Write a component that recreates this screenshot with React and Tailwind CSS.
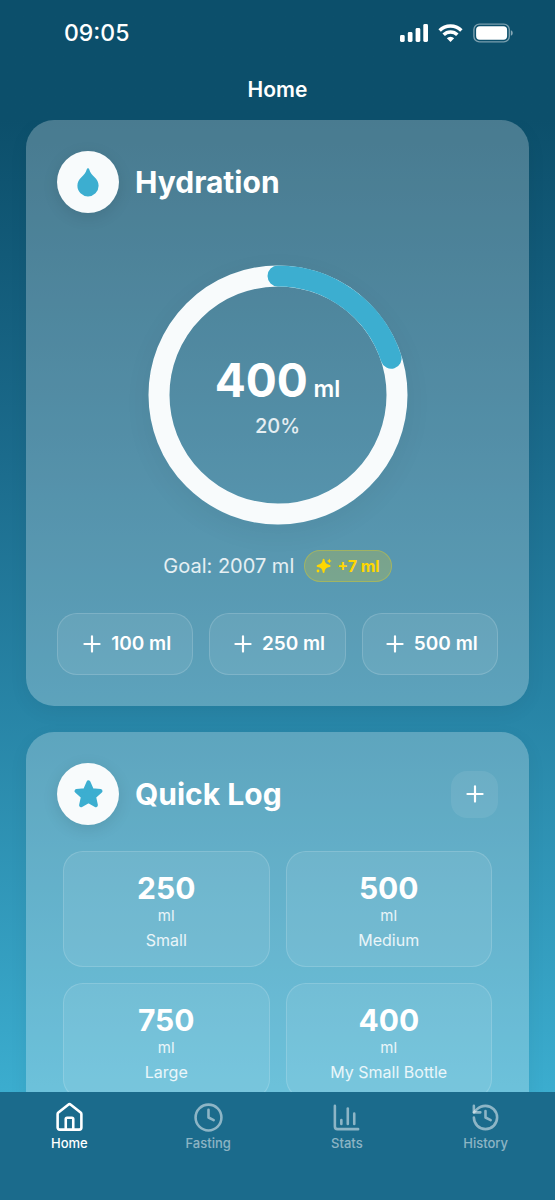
import React from "react";
import { ChartColumn, Clock, History, Plus } from "lucide-react";

const quickAmounts = [100, 250, 500];

const bottles = [
  { amount: 250, name: "Small" },
  { amount: 500, name: "Medium" },
  { amount: 750, name: "Large" },
  { amount: 400, name: "My Small Bottle" },
];

function DropIcon() {
  return (
    <svg viewBox="0 0 22 29" className="h-[29px] w-[22px]" fill="currentColor" aria-hidden="true">
      <path d="M11 .3c.7 0 1.1.4 1.3 1.1.8 3.5 2.9 5.4 5.3 7.9 2.4 2.4 4 5 4 8.5a10.6 10.6 0 0 1-21.2 0c0-3.5 1.6-6.1 4-8.5 2.4-2.5 4.5-4.4 5.3-7.9.2-.7.6-1.1 1.3-1.1z" />
    </svg>
  );
}

function StarIcon() {
  return (
    <svg
      viewBox="0 0 31 31"
      className="size-[31px]"
      fill="currentColor"
      stroke="currentColor"
      strokeWidth="4"
      strokeLinejoin="round"
      aria-hidden="true"
    >
      <path d="M15.5 3.4 19 11.2 27.5 12.1 21.1 17.8 22.9 26.2 15.5 21.9 8.1 26.2 9.9 17.8 3.5 12.1 12 11.2z" />
    </svg>
  );
}

function SparklesIcon() {
  return (
    <svg viewBox="0 0 16 16" className="size-4" fill="currentColor" aria-hidden="true">
      <path d="M7.6.8c.5 0 .8.3.9.8.5 3.6 1.700 4.700 5.200 5.300.5.1.8.5.8 1s-.3.900-.8 1c-3.500.6-4.700 1.700-5.200 5.300-.1.500-.4.800-.9.800s-.8-.3-.9-.8c-.5-3.600-1.700-4.700-5.200-5.300-.5-.1-.8-.5-.8-1s.3-.9.8-1c3.500-.6 4.700-1.700 5.200-5.300.1-.5.4-.8.900-.8z" />
      <path d="M13.300.6 14.100 2.200 15.700 3 14.100 3.800 13.300 5.400 12.500 3.800 10.900 3 12.500 2.200z" />
      <circle cx="2" cy="13" r="1.4" />
    </svg>
  );
}

function HomeIcon({ className, strokeWidth }) {
  return (
    <svg
      viewBox="0 0 24 24"
      fill="none"
      stroke="currentColor"
      strokeWidth={strokeWidth}
      strokeLinecap="round"
      strokeLinejoin="round"
      className={className}
      aria-hidden="true"
    >
      <path d="M2.8 9.4a1.6 1.6 0 0 1 .6-1.2L11 2.1a1.6 1.6 0 0 1 2 0l7.6 6.1a1.6 1.6 0 0 1 .6 1.2v10.4a1.6 1.6 0 0 1-1.6 1.6H4.4a1.6 1.6 0 0 1-1.6-1.6z" />
      <path d="M9.1 21.4v-8.2a1 1 0 0 1 1-1h3.8a1 1 0 0 1 1 1v8.2" />
    </svg>
  );
}

const tabs = [
  { label: "Home", icon: HomeIcon, active: true },
  { label: "Fasting", icon: Clock },
  { label: "Stats", icon: ChartColumn },
  { label: "History", icon: History },
];

function StatusBar() {
  return (
    <div className="flex h-[66px] items-center justify-between pr-[42px] pl-16">
      <span className="text-[23px] font-medium">09:05</span>
      <div className="flex items-center gap-[10px]">
        <svg viewBox="0 0 28 20" className="h-5 w-7" fill="currentColor" aria-hidden="true">
          <rect x="0" y="12" width="4.7" height="7" rx="1.4" />
          <rect x="7.8" y="9" width="4.7" height="10" rx="1.4" />
          <rect x="15.6" y="5" width="4.7" height="14" rx="1.4" />
          <rect x="23.3" y="1" width="4.7" height="18" rx="1.4" />
        </svg>
        <svg viewBox="0 0 26 20" className="h-5 w-[25px]" fill="none" stroke="currentColor" strokeWidth="3.6" aria-hidden="true">
          <path d="M1.7 7.4a16 16 0 0 1 22.6 0" />
          <path d="M5.9 11.9a10 10 0 0 1 14.2 0" />
          <path d="M13 19.3l-3.8-3.9a5.4 5.4 0 0 1 7.6 0z" fill="currentColor" stroke="none" />
        </svg>
        <svg viewBox="0 0 40 20" className="h-5 w-10" aria-hidden="true">
          <rect x="0.9" y="1.1" width="35.4" height="17.8" rx="5.5" fill="none" stroke="currentColor" strokeOpacity="0.45" strokeWidth="1.4" />
          <rect x="3.1" y="3.3" width="31" height="13.4" rx="3.6" fill="currentColor" />
          <path d="M37.8 7.3c1.6.6 1.9 1.7 1.9 2.7s-.3 2.1-1.9 2.7z" fill="currentColor" fillOpacity="0.5" />
        </svg>
      </div>
    </div>
  );
}

function CardTitle({ icon: Icon, children }) {
  return (
    <div className="flex items-center gap-4">
      <div className="flex size-[62px] items-center justify-center rounded-full bg-[#f8fbfc] text-[#3caed0] shadow-[0_4px_16px] shadow-black/10">
        <Icon />
      </div>
      <h2 className="text-3xl font-bold">{children}</h2>
    </div>
  );
}

function ProgressRing({ amount, percent }) {
  return (
    <div className="relative mx-auto size-[260px] rounded-full shadow-[0_8px_28px] shadow-black/5">
      <svg viewBox="0 0 260 260" className="size-full -rotate-90" fill="none" strokeWidth="21" aria-hidden="true">
        <circle cx="130" cy="130" r="119" stroke="#f8fbfc" />
        <circle
          cx="130"
          cy="130"
          r="119"
          stroke="#3caed0"
          strokeLinecap="round"
          pathLength="100"
          strokeDasharray={`${percent} 100`}
        />
      </svg>
      <div className="absolute inset-0 flex flex-col items-center justify-center pt-[6px]">
        <p className="text-[23px] leading-[46px] font-semibold">
          <span className="text-[46px] font-bold">{amount}</span> ml
        </p>
        <p className="text-xl leading-7 font-medium text-white/85">{percent}%</p>
      </div>
    </div>
  );
}

export default function App() {
  return (
    <div className="flex h-screen flex-col bg-linear-to-b from-[#0c4f6b] from-10% via-[#1b6b8c] via-38% to-[#3caed0] to-92% font-['Inter',sans-serif] text-white">
      <header className="shrink-0">
        <StatusBar />
        <h1 className="h-[54px] text-center text-[21px] leading-[48px] font-semibold">Home</h1>
      </header>

      <main className="min-h-0 flex-1 space-y-[26px] overflow-y-auto px-[26px] [scrollbar-width:none]">
        <section className="rounded-[28px] bg-white/25 p-[31px] shadow-[0_6px_20px] shadow-black/5">
          <CardTitle icon={DropIcon}>Hydration</CardTitle>
          <div className="pt-[52px] pb-[25px]">
            <ProgressRing amount={400} percent={20} />
          </div>
          <div className="flex items-center justify-center gap-[10px]">
            <p className="text-xl text-white/85">Goal: 2007 ml</p>
            <span className="flex h-8 items-center gap-[5px] rounded-full border border-[#ffd700]/30 bg-[#ffd700]/20 px-[11px] text-base font-bold text-[#ffd700]">
              <SparklesIcon />
              +7 ml
            </span>
          </div>
          <div className="mt-[31px] grid grid-cols-3 gap-4">
            {quickAmounts.map((amount) => (
              <button
                key={amount}
                className="flex h-[62px] items-center justify-center gap-[6px] rounded-[20px] border border-white/15 bg-white/8 text-[19px] font-semibold"
              >
                <Plus className="size-[26px]" strokeWidth={2} />
                {amount} ml
              </button>
            ))}
          </div>
        </section>

        <section className="rounded-[28px] bg-white/25 p-[31px] shadow-[0_6px_20px] shadow-black/5">
          <div className="flex items-center justify-between">
            <CardTitle icon={StarIcon}>Quick Log</CardTitle>
            <button aria-label="Add bottle" className="flex size-[47px] items-center justify-center rounded-2xl bg-white/8">
              <Plus className="size-[26px]" strokeWidth={2} />
            </button>
          </div>
          <div className="mt-[26px] grid grid-cols-2 gap-4 px-[6px]">
            {bottles.map((bottle) => (
              <button
                key={bottle.name}
                className="flex h-[116px] flex-col items-center justify-center rounded-[20px] border border-white/15 bg-white/8 pt-[6px]"
              >
                <span className="text-3xl leading-8 font-bold">{bottle.amount}</span>
                <span className="text-[15px] leading-6 text-white/85">ml</span>
                <span className="text-base leading-6 text-white/85">{bottle.name}</span>
              </button>
            ))}
          </div>
        </section>
      </main>

      <nav className="grid h-[108px] shrink-0 grid-cols-4 items-start bg-[#1b6b8c] pt-[10px]">
        {tabs.map(({ label, icon: Icon, active }) => (
          <a
            key={label}
            href={`#${label.toLowerCase()}`}
            aria-current={active ? "page" : undefined}
            className={
              active
                ? "flex flex-col items-center text-[13px] leading-5 font-medium text-white"
                : "flex flex-col items-center text-[13px] leading-5 font-medium text-white/50"
            }
          >
            <Icon className="size-[31px]" strokeWidth={2} />
            {label}
          </a>
        ))}
      </nav>
    </div>
  );
}
